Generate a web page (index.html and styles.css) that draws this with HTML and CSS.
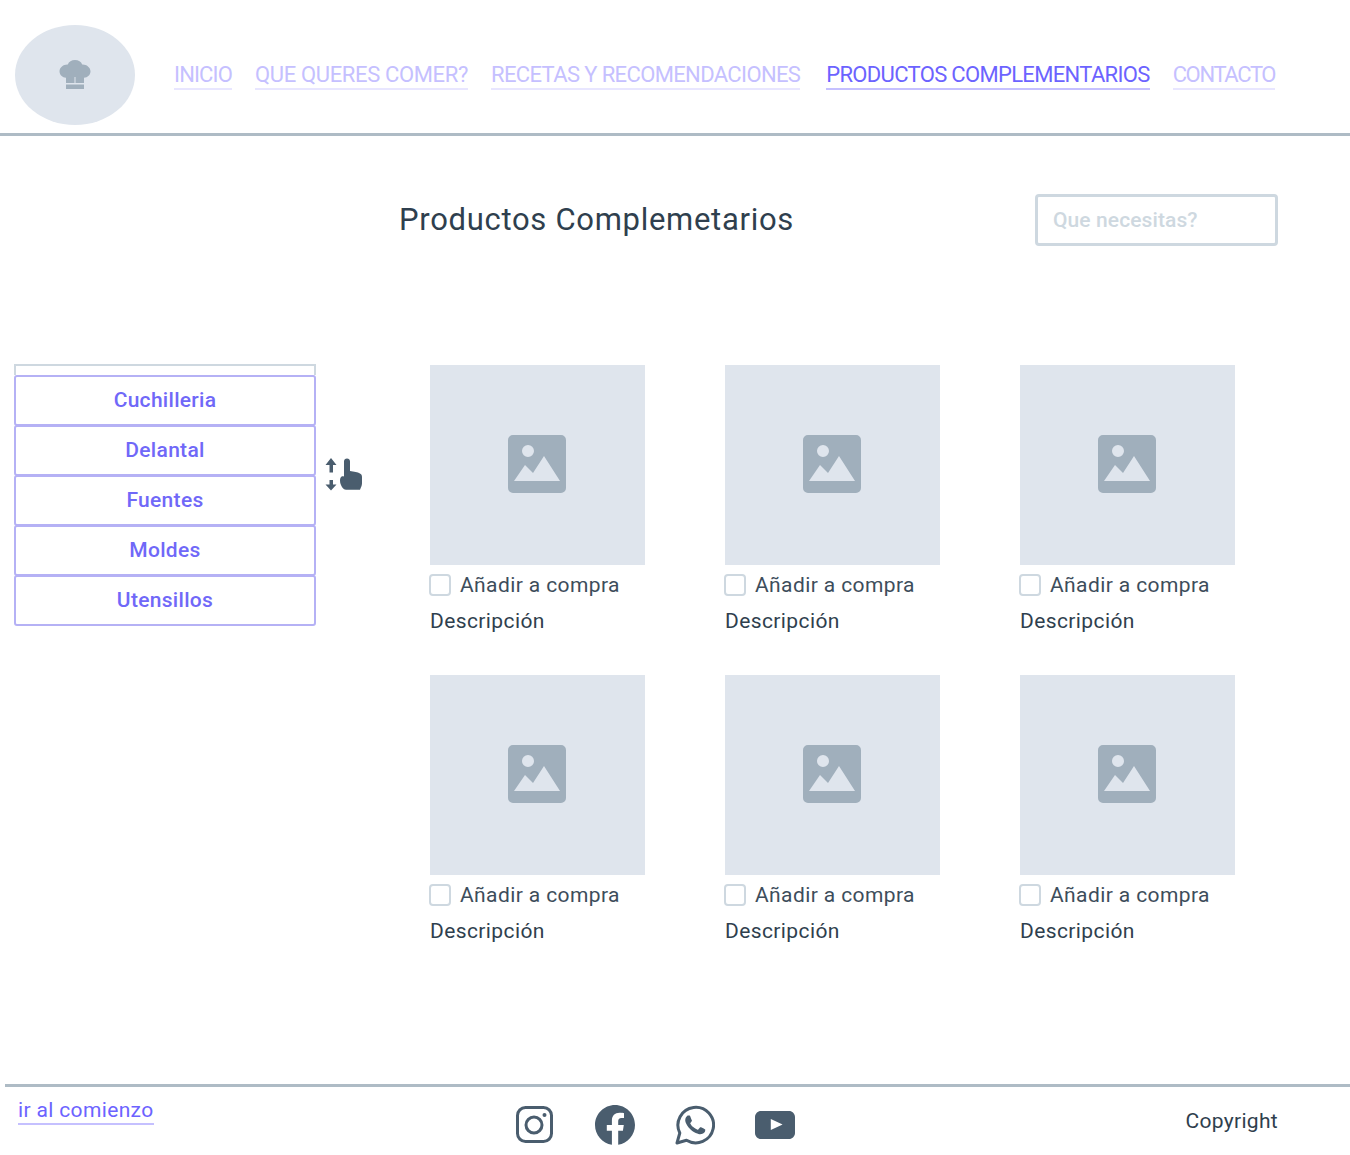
FILE: index.html
```html
<!DOCTYPE html>
<html lang="es">
<head>
    <meta charset="UTF-8">
    <meta name="viewport" content="width=device-width, initial-scale=1.0">
    <title>Productos Complementarios</title>
    <link rel="stylesheet" href="styles.css">
</head>
<body>
    <svg class="defs" width="0" height="0" aria-hidden="true">
        <symbol id="placeholder" viewBox="0 0 58 58">
            <path fill-rule="evenodd" d="M5 0h48a5 5 0 0 1 5 5v48a5 5 0 0 1-5 5H5a5 5 0 0 1-5-5V5a5 5 0 0 1 5-5zM26 16a6 6 0 1 0-12 0a6 6 0 0 0 12 0zM6 46h46L36 21 25 38l-8-8z"/>
        </symbol>
    </svg>

    <header class="top">
        <div class="logo">
            <svg width="32" height="32" viewBox="0 0 32 32"><path d="M16 1c3.500 0 6.200 1.800 7.200 4.400C27 5.100 31.500 7.900 31.500 12.300c0 3.700-2.900 6.300-6.500 6.500V24h-8.500v-6h-1v6H7v-5.200c-3.600-.2-6.500-2.800-6.500-6.500C.5 7.900 5 5.100 8.800 5.400 9.800 2.800 12.500 1 16 1zM7 25.500h18V30H7z"/></svg>
        </div>
        <nav class="menu">
            <a href="#" class="m1">INICIO</a>
            <a href="#" class="m2">QUE QUERES COMER?</a>
            <a href="#" class="m3">RECETAS Y RECOMENDACIONES</a>
            <a href="#" class="m4 active">PRODUCTOS COMPLEMENTARIOS</a>
            <a href="#" class="m5">CONTACTO</a>
        </nav>
    </header>

    <section class="heading">
        <h1>Productos Complemetarios</h1>
        <input class="search" type="text" placeholder="Que necesitas?">
    </section>

    <main class="content">
        <aside class="side">
            <div class="side-top"></div>
            <a href="#">Cuchilleria</a>
            <a href="#">Delantal</a>
            <a href="#">Fuentes</a>
            <a href="#">Moldes</a>
            <a href="#">Utensillos</a>
        </aside>

        <svg class="scroll-hint" width="40" height="33" viewBox="0 0 40 33">
            <path d="M6 0l5.500 7H8v7.500H4.500V7H.5zM4.500 22H8v4.500h3.500L6 32.500.5 26.500h4z"/>
            <path d="M19 3.500c0-1.900 1.200-3 3-3s3 1.100 3 3V13c4 .5 8 1.300 9.500 2.300 2 .7 2.500 2 2.500 4v6c0 1.500-.5 3-1 4l-1 2.500H21c-1.500 0-2.500-.7-3.500-2-1-1.500-2.500-4-2.500-7 0-2 .5-4 2-4.500.7-.3 1.300-.2 2 .2z"/>
        </svg>

        <div class="grid">
            <article class="card">
                <div class="thumb"><svg width="58" height="58"><use href="#placeholder"/></svg></div>
                <label class="buy"><input type="checkbox"> Añadir a compra</label>
                <p class="desc">Descripción</p>
            </article>
            <article class="card">
                <div class="thumb"><svg width="58" height="58"><use href="#placeholder"/></svg></div>
                <label class="buy"><input type="checkbox"> Añadir a compra</label>
                <p class="desc">Descripción</p>
            </article>
            <article class="card">
                <div class="thumb"><svg width="58" height="58"><use href="#placeholder"/></svg></div>
                <label class="buy"><input type="checkbox"> Añadir a compra</label>
                <p class="desc">Descripción</p>
            </article>
            <article class="card">
                <div class="thumb"><svg width="58" height="58"><use href="#placeholder"/></svg></div>
                <label class="buy"><input type="checkbox"> Añadir a compra</label>
                <p class="desc">Descripción</p>
            </article>
            <article class="card">
                <div class="thumb"><svg width="58" height="58"><use href="#placeholder"/></svg></div>
                <label class="buy"><input type="checkbox"> Añadir a compra</label>
                <p class="desc">Descripción</p>
            </article>
            <article class="card">
                <div class="thumb"><svg width="58" height="58"><use href="#placeholder"/></svg></div>
                <label class="buy"><input type="checkbox"> Añadir a compra</label>
                <p class="desc">Descripción</p>
            </article>
        </div>
    </main>

    <footer class="bottom">
        <a href="#" class="to-top">ir al comienzo</a>
        <div class="social">
            <svg width="40" height="40" viewBox="0 0 40 40" class="outline">
                <rect x="2.500" y="2.500" width="34" height="34" rx="8"/>
                <circle cx="19" cy="20" r="8"/>
                <circle class="dot" cx="29.500" cy="10" r="2"/>
            </svg>
            <svg width="40" height="40" viewBox="0 0 40 40">
                <path d="M40 20C40 9 31 0 20 0S0 9 0 20c0 10 7.300 18.300 16.900 19.800V25.800h-5.100V20h5.100v-4.400c0-5 3-7.800 7.600-7.800 2.200 0 4.500.4 4.500.4v4.900h-2.500c-2.500 0-3.300 1.500-3.300 3.100V20h5.600l-.9 5.800h-4.700v14C32.700 38.300 40 30 40 20z"/>
            </svg>
            <svg width="40" height="40" viewBox="0 0 40 40">
                <path class="bubble" d="M2 38l2.800-10A17.800 17.800 0 1 1 11.500 35.300z"/>
                <path d="M29.400 23.900c-.5-.2-2.900-1.400-3.400-1.600-.5-.2-.8-.2-1.100.2-.3.500-1.300 1.600-1.600 2-.3.300-.6.400-1.100.1-.5-.2-2.100-.8-4-2.500-1.500-1.300-2.500-2.900-2.800-3.400-.3-.5 0-.8.200-1 .2-.2.500-.6.700-.9.200-.3.300-.5.500-.8.200-.3.100-.6 0-.9-.1-.2-1.100-2.700-1.500-3.700-.4-1-.8-.8-1.100-.8h-1c-.3 0-.9.100-1.300.6-.5.500-1.700 1.700-1.700 4.100s1.800 4.800 2 5.100c.2.300 3.500 5.400 8.500 7.500 1.200.5 2.100.8 2.800 1 1.200.4 2.300.3 3.100.2.900-.1 2.900-1.200 3.300-2.300.4-1.200.4-2.100.3-2.300-.1-.2-.4-.3-.9-.6z"/>
            </svg>
            <svg width="40" height="40" viewBox="0 0 40 40">
                <path fill-rule="evenodd" d="M6 6h28c3.300 0 6 2.700 6 6v16c0 3.300-2.700 6-6 6H6c-3.300 0-6-2.700-6-6V12c0-3.300 2.700-6 6-6zm9.800 8v11l11.800-5.500z"/>
            </svg>
        </div>
        <span class="copy">Copyright</span>
    </footer>
</body>
</html>
```

FILE: styles.css
```css
* { box-sizing: border-box; }
html, body { height: 1155px; overflow: hidden; }
body { margin: 0; font-family: Roboto, "Liberation Sans", sans-serif; color: #2f3f4e; background: #fff; }
a { text-decoration: none; }
.defs { display: block; height: 0; }

/* cabecera */
.top { display: flex; align-items: center; height: 136px; padding: 17px 0 0 15px; border-bottom: 3px solid #aebbc5; }
.logo { display: flex; align-items: center; justify-content: center; width: 120px; height: 100px; border-radius: 50%; background: #dfe5ed; fill: #a0afbc; }
.menu { display: flex; margin-left: 39px; margin-top: 1px; }
.menu a { padding-top: 1px; font-size: 22px; line-height: 26px; color: #c5c0ff; border-bottom: 2px solid #e8e6ff; margin-right: 23px; white-space: nowrap; }
.menu a.active { color: #6c63ff; border-bottom-color: #c5c0ff; }
.menu .m1 { letter-spacing: -0.85px; }
.menu .m2 { letter-spacing: -0.35px; }
.menu .m3 { letter-spacing: -0.63px; margin-right: 26px; }
.menu .m4 { letter-spacing: -0.67px; }
.menu .m5 { letter-spacing: -1.35px; }

.heading { display: flex; justify-content: space-between; align-items: center; padding: 58px 72px 0 399px; }
h1 { margin: -2px 0 0; font-size: 31px; font-weight: 400; letter-spacing: 0.7px; color: #2f3f4e; }
.search { width: 243px; height: 52px; padding: 0 15px; border: 3px solid #ced8e0; border-radius: 4px; font: 500 21px Roboto, sans-serif; letter-spacing: 0.1px; outline: none; }
.search::placeholder { color: #ced8e0; opacity: 1; }

/* contenido */
.content { display: flex; align-items: flex-start; padding: 118px 0 0 14px; }
.side { display: flex; flex-direction: column; width: 302px; height: 262px; }
.side-top { height: 11px; border: 2px solid #ced8e0; border-bottom: none; }
.side a { display: flex; flex: none; align-items: center; justify-content: center; height: 51px; margin-bottom: -1px; padding-bottom: 2px; border: 2px solid #b5b1f5; border-radius: 3px; font-size: 21px; font-weight: 500; letter-spacing: 0.3px; color: #7068f8; }
.scroll-hint { flex: none; margin: 94px 0 0 9px; fill: #4a5d6e; }

.grid { display: grid; grid-template-columns: repeat(3, 215px); grid-auto-rows: 310px; column-gap: 80px; margin: 1px 0 0 65px; }
.thumb { display: flex; align-items: center; justify-content: center; height: 200px; padding: 0 2px 2px 0; background: #dfe5ed; fill: #a0afbc; }
.buy { display: flex; align-items: center; gap: 9px; margin: 9px 0 0 -1px; height: 22px; font-size: 21px; letter-spacing: 0.4px; color: #3d4d5b; }
.buy input { appearance: none; flex: none; width: 22px; height: 22px; margin: 0; border: 2px solid #ced8e0; border-radius: 4px; background: #fff; }
.desc { margin: 13px 0 0; font-size: 21px; line-height: 24px; letter-spacing: 0.4px; color: #2f3f4e; }

/* pie */
.bottom { position: relative; display: flex; justify-content: space-between; height: 71px; margin: 99px 0 0 5px; padding: 10px 72px 0 13px; border-top: 3px solid #aebbc5; }
.to-top { align-self: flex-start; font-size: 21px; line-height: 26px; color: #6c63ff; border-bottom: 2px solid #c5c0ff; letter-spacing: 0.35px; }
.social { display: flex; gap: 40px; margin: 8px 30px 0 0; height: 40px; fill: #4a5d6e; }
.outline { fill: none; stroke: #4a5d6e; stroke-width: 3; }
.outline .dot { fill: #4a5d6e; stroke: none; }
.bubble { fill: none; stroke: #4a5d6e; stroke-width: 3; stroke-linejoin: round; }
.copy { font-size: 21px; line-height: 48px; letter-spacing: 0.3px; color: #2f3f4e; }
```
